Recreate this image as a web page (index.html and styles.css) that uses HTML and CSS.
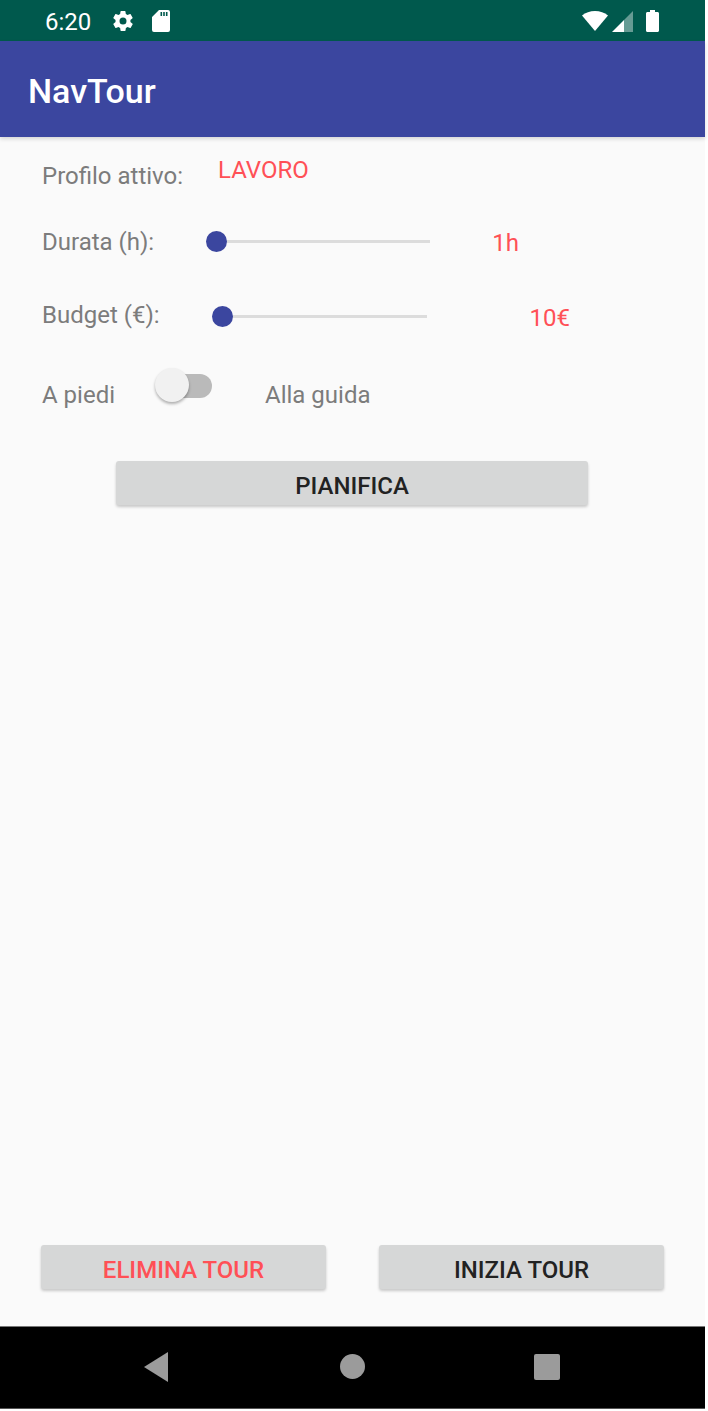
FILE: index.html
```html
<!DOCTYPE html>
<html lang="en">
<head>
    <meta charset="UTF-8">
    <meta name="viewport" content="width=device-width, initial-scale=1.0">
    <title>NavTour</title>
    <link rel="stylesheet" href="styles.css">
</head>
<body>

<div class="phone">
    <!-- Status bar -->
    <div class="status-bar">
        <span class="clock">6:20</span>
        <svg class="status-icon gear" viewBox="0 0 24 24" width="24" height="24"><path fill="#fff" d="M19.4 13c.04-.32.07-.65.07-1s-.03-.68-.07-1l2.100-1.650c.2-.15.25-.42.13-.64l-2-3.460c-.12-.22-.4-.3-.6-.22l-2.500 1c-.52-.4-1.080-.73-1.700-.98l-.37-2.650A.5.5 0 0 0 14 2h-4a.5.5 0 0 0-.5.42l-.37 2.650c-.62.25-1.180.58-1.700.98l-2.500-1c-.22-.08-.48 0-.6.22l-2 3.460c-.13.22-.07.49.13.64L4.570 11c-.04.32-.07.66-.07 1s.03.68.07 1l-2.100 1.650c-.2.15-.25.42-.13.64l2 3.460c.12.22.4.3.6.22l2.500-1c.52.4 1.080.73 1.700.98l.37 2.650c.05.24.25.42.5.42h4c.25 0 .45-.18.5-.42l.37-2.650c.62-.25 1.180-.58 1.700-.98l2.500 1c.22.08.48 0 .6-.22l2-3.460c.12-.22.07-.49-.13-.64L19.4 13zM12 15.500a3.500 3.500 0 1 1 0-7 3.500 3.500 0 0 1 0 7z"/></svg>
        <svg class="status-icon sd" viewBox="0 0 18 22" width="18" height="22"><path fill="#fff" fill-rule="evenodd" d="M7 0h9a2 2 0 0 1 2 2v18a2 2 0 0 1-2 2H2a2 2 0 0 1-2-2V7zM8.500 2v4h1.600V2zM11.200 2v4h1.600V2zM13.900 2v4h1.600V2z"/></svg>
        <span class="status-spacer"></span>
        <svg class="status-icon wifi" viewBox="0 0 26 20" width="26" height="20"><path fill="#fff" d="M13 20 0 4.500C3.500 1.700 8 0 13 0s9.500 1.700 13 4.500z"/></svg>
        <svg class="status-icon signal" viewBox="0 0 22 22" width="22" height="22"><path fill="#fff" d="M0 22 12 10v12z"/><path fill="#fff" opacity=".4" d="M12 10 21 1v21h-9z"/></svg>
        <svg class="status-icon battery" viewBox="0 0 13 22" width="13" height="22"><path fill="#fff" d="M4 2V0h5v2h2.500c.8 0 1.500.7 1.500 1.500V20.500c0 .8-.7 1.500-1.500 1.500h-10C.7 22 0 21.300 0 20.500V3.500C0 2.700.7 2 1.500 2z"/></svg>
    </div>

    <!-- App bar -->
    <div class="app-bar">NavTour</div>

    <div class="content">
        <div class="row profile-row">
            <span class="label">Profilo attivo:</span>
            <span class="value profile-value">LAVORO</span>
        </div>

        <div class="row duration-row">
            <span class="label">Durata (h):</span>
            <div class="slider duration-slider"><span class="thumb"></span></div>
            <span class="value duration-value">1h</span>
        </div>

        <div class="row budget-row">
            <span class="label">Budget (€):</span>
            <div class="slider budget-slider"><span class="thumb"></span></div>
            <span class="value budget-value">10€</span>
        </div>

        <div class="row mode-row">
            <span class="label">A piedi</span>
            <div class="switch"><span class="knob"></span></div>
            <span class="label">Alla guida</span>
        </div>

        <div class="plan-wrap">
            <div class="btn plan-btn">PIANIFICA</div>
        </div>

        <!-- Bottom buttons -->
        <div class="bottom-buttons">
            <div class="btn danger">ELIMINA TOUR</div>
            <div class="btn">INIZIA TOUR</div>
        </div>
    </div>

    <!-- Navigation bar -->
    <div class="nav-bar">
        <svg viewBox="0 0 24 30" width="24" height="30"><path fill="#9b9b9b" d="M24 0v30L0 15z"/></svg>
        <span class="nav-circle"></span>
        <span class="nav-square"></span>
    </div>
</div>

</body>
</html>
```

FILE: styles.css
```css
html, body {
    margin: 0;
    padding: 0;
    background-color: #fff;
}

/* Screen */
.phone {
    width: 705px;
    height: 1409px;
    display: flex;
    flex-direction: column;
    font-family: Roboto, "Liberation Sans", sans-serif;
    background-color: #fafafa;
}

/* Status bar */
.status-bar {
    height: 41px;
    background-color: #00594d;
    color: #fff;
    display: flex;
    align-items: center;
    padding: 0 46px 0 45px;
}

.clock {
    font-size: 24px;
    width: 66px;
    padding-top: 3px;
}

.status-icon {
    display: block;
}

.sd {
    margin-left: 17px;
}

.status-spacer {
    flex: 1;
}

.signal {
    margin-left: 4px;
}

.battery {
    margin-left: 12px;
}

/* App bar */
.app-bar {
    height: 96px;
    background-color: #3b469f;
    color: #fff;
    font-size: 34px;
    font-weight: 500;
    line-height: 100px;
    padding-left: 28px;
    box-shadow: 0 2px 4px rgba(0, 0, 0, 0.15);
    position: relative;
}

/* Content rows */
.content {
    flex: 1;
    display: flex;
    flex-direction: column;
    padding: 0 41px 0 42px;
}

.row {
    display: flex;
    align-items: center;
}

.label {
    font-size: 24px;
    color: #7c7c7c;
}

.value {
    font-size: 24px;
    color: #ff5056;
}

.profile-row {
    margin-top: 21px;
    height: 36px;
}

.profile-value {
    margin-left: 35px;
    padding-bottom: 12px;
}

.duration-row {
    margin-top: 29px;
    height: 36px;
}

.duration-row .label {
    padding-top: 2px;
}

.budget-row {
    margin-top: 39px;
    height: 36px;
}

.budget-row .label {
    padding-bottom: 2px;
}

.mode-row {
    margin-top: 43px;
    height: 36px;
}

/* Sliders */
.slider {
    height: 3px;
    background-color: #dcdcdc;
    position: relative;
}

.thumb {
    position: absolute;
    left: -11px;
    top: -9px;
    width: 21px;
    height: 21px;
    border-radius: 50%;
    background-color: #3b469f;
}

.duration-slider {
    width: 213px;
    margin-left: 63px;
}

.duration-value {
    margin-left: 62px;
    padding-top: 4px;
}

.budget-slider {
    width: 204px;
    margin-left: 63px;
}

.budget-value {
    margin-left: 103px;
    padding-top: 4px;
}

/* Switch */
.switch {
    width: 47px;
    height: 24px;
    margin-left: 50px;
    margin-top: -18px;
    border-radius: 12px;
    background-color: #bababa;
    position: relative;
}

.knob {
    position: absolute;
    left: -10px;
    top: -6px;
    width: 34px;
    height: 34px;
    border-radius: 50%;
    background-color: #f1f1f1;
    box-shadow: 0 2px 3px rgba(0, 0, 0, 0.3);
}

.mode-row .switch + .label {
    margin-left: 53px;
}

/* Buttons */
.btn {
    height: 44px;
    line-height: 50px;
    text-align: center;
    font-size: 24px;
    font-weight: 500;
    color: #222;
    background-color: #d6d7d7;
    border-radius: 3px;
    box-shadow: 0 2px 3px rgba(0, 0, 0, 0.2);
}

.danger {
    color: #ff5056;
}

.plan-wrap {
    margin-top: 48px;
    padding-left: 74px;
}

.plan-btn {
    width: 472px;
}

.bottom-buttons {
    margin-top: auto;
    margin-bottom: 37px;
    display: grid;
    grid-template-columns: 285px 285px;
    column-gap: 53px;
    margin-left: -1px;
}

/* Navigation bar */
.nav-bar {
    height: 83px;
    box-sizing: border-box;
    background-color: #000;
    border-top: 1px solid #777;
    border-bottom: 1px solid #555;
    display: flex;
    align-items: center;
    padding-left: 144px;
    padding-bottom: 2px;
}

.nav-circle {
    width: 25px;
    height: 25px;
    border-radius: 50%;
    background-color: #9b9b9b;
    margin-left: 172px;
}

.nav-square {
    width: 26px;
    height: 26px;
    border-radius: 2px;
    background-color: #9b9b9b;
    margin-left: 169px;
}
```
